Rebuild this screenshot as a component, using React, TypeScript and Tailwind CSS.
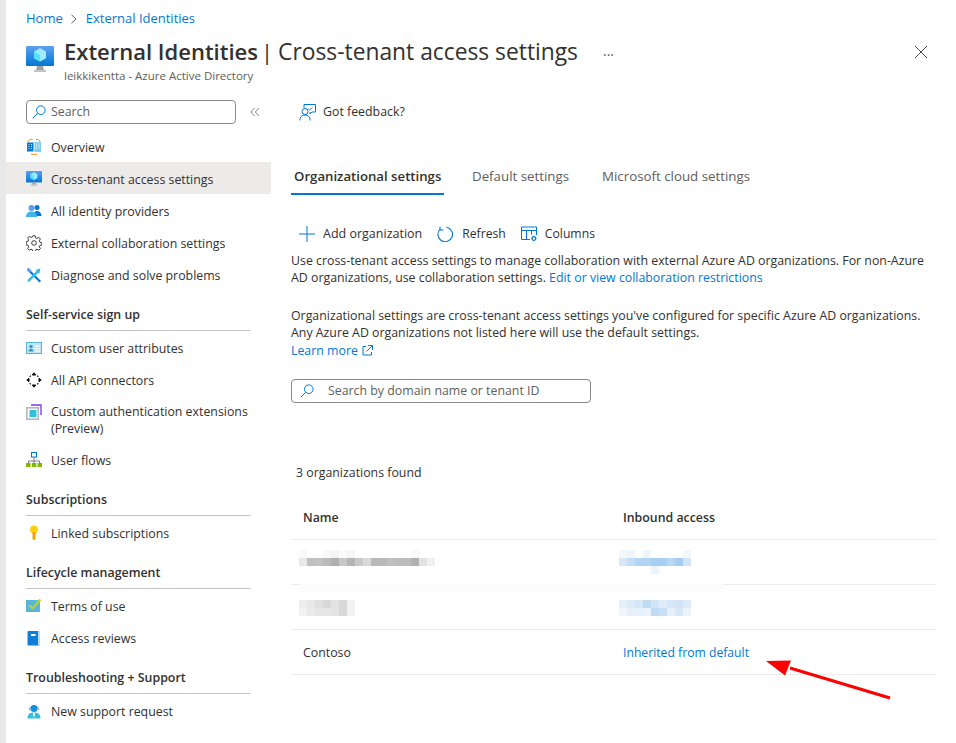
import React from "react";

const font = { fontFamily: '"Open Sans", "Noto Sans", sans-serif' };

const MonitorIcon = ({ size = 16 }: { size?: number }) => (
  <svg width={size} height={size} viewBox="0 0 28 28">
    <defs>
      <linearGradient id="mon" x1="0" y1="0" x2="0" y2="1">
        <stop offset="0" stopColor="#5ea0ef" />
        <stop offset="1" stopColor="#0078d4" />
      </linearGradient>
    </defs>
    <rect x="0" y="0" width="28" height="20" rx="1" fill="url(#mon)" />
    <path d="M11 20h6l1 4h-8z" fill="#a3a3a3" />
    <rect x="8" y="24" width="12" height="2" fill="#c4c4c4" />
    <path d="M14 2l6 3.400v6.800l-6 3.400-6-3.400V5.400z" fill="#9cebff" />
    <path d="M14 9v6.600l-6-3.400V5.400z" fill="#50e6ff" />
  </svg>
);

const OverviewIcon = () => (
  <svg width="16" height="16" viewBox="0 0 16 16">
    <path d="M2 3c0-1.500 1.500-2.500 3.500-2.500h1M10 .5h1c2 0 3 1 3 2.500M5 15.300h6" stroke="#f78d1e" fill="none" />
    <rect x="1" y="3.500" width="6.500" height="9" fill="#0078d4" />
    <rect x="8.500" y="3" width="6.500" height="10" fill="#7fcdee" />
    <path d="M2.500 5.500h1M5 5.500h1M2.500 7.500h1M5 7.500h1M2.500 9.500h1M5 9.500h1" stroke="#cfe8fa" />
    <path d="M10 5h1M12.500 5h1M10 7h1M12.500 7h1M10 9h1M12.500 9h1" stroke="#fff" />
  </svg>
);

const PeopleIcon = () => (
  <svg width="16" height="16" viewBox="0 0 16 16">
    <circle cx="11" cy="4.500" r="2.500" fill="#0078d4" />
    <path d="M7.500 13c0-3 1.500-5 3.500-5s4.500 1.500 4.500 5z" fill="#0078d4" />
    <circle cx="5.500" cy="5" r="3" fill="#5ea0ef" />
    <path d="M0 14c0-3.500 2-5.500 5.500-5.500S11 10.500 11 14z" fill="#3fb4e8" />
  </svg>
);

const GearIcon = () => (
  <svg width="16" height="16" viewBox="0 0 16 16" fill="none" stroke="#3b3a39">
    <circle cx="8" cy="8" r="2.300" />
    <path d="M6.800.8h2.400l.4 2 1.400.6 1.800-1.100 1.600 1.700-1.100 1.700.6 1.500 1.900.4v2.400l-1.900.4-.6 1.500 1.100 1.700-1.600 1.700-1.800-1.100-1.400.6-.4 2H6.800l-.4-2-1.400-.6-1.800 1.100-1.600-1.700 1.100-1.700-.6-1.500-1.900-.4V6.600l1.900-.4.600-1.500-1.100-1.700L3.200 1.300 5 2.400l1.400-.6z" />
  </svg>
);

const ToolsIcon = () => (
  <svg width="16" height="16" viewBox="0 0 16 16">
    <path d="M2 1l13 13-1.500 1.500L1 3z" fill="#0078d4" />
    <path d="M14.500 1.500l-4 1-.5 2L2 12.500 1.500 15l2-.5 8-8 2-.5z" fill="#32bedd" />
    <path d="M1 2l2-1 2.500 2.500-2 2z" fill="#5ea0ef" />
  </svg>
);

const AttrIcon = () => (
  <svg width="16" height="14" viewBox="0 0 16 14">
    <rect x=".5" y="1.500" width="15" height="11" fill="#c3e7f5" stroke="#59b4d9" />
    <circle cx="5" cy="5.500" r="1.700" fill="#3999c6" />
    <path d="M2.500 10.500c0-2 1-2.800 2.500-2.800s2.500.8 2.500 2.800z" fill="#3999c6" />
    <path d="M9 5h5M9 7.500h5M9 10h5" stroke="#fff" />
  </svg>
);

const MoveIcon = () => (
  <svg width="16" height="16" viewBox="0 0 16 16" fill="none" stroke="#111">
    <path d="M8 .8L6.200 3h3.600z" fill="#111" />
    <path d="M8 15.200L6.200 13h3.600z" fill="#111" />
    <path d="M.8 8L3 6.200v3.600z" fill="#111" />
    <path d="M15.200 8L13 6.200v3.600z" fill="#111" />
    <path d="M3.500 4.500h1M4.500 3.500v1M12.500 4.500h-1M11.500 3.500v1M3.500 11.500h1M4.500 12.500v-1M12.500 11.500h-1M11.500 12.500v-1" />
  </svg>
);

const ExtIcon = () => (
  <svg width="16" height="16" viewBox="0 0 16 16">
    <path d="M5 1h10v10" fill="none" stroke="#773adc" strokeWidth="1.300" />
    <rect x=".8" y="3.800" width="11.400" height="11.400" fill="#fff" stroke="#b3b3b3" strokeWidth="1.500" />
    <rect x="3.500" y="6" width="7" height="7" fill="#32bedd" />
  </svg>
);

const FlowIcon = () => (
  <svg width="16" height="16" viewBox="0 0 16 16">
    <path d="M8 5v4M2.500 12V9h11v3M8 9v3" fill="none" stroke="#7a7a7a" />
    <rect x="5.500" y=".5" width="5" height="4.500" fill="#fff" stroke="#0078d4" />
    <rect x="0" y="11" width="4.500" height="4" fill="#7fba00" />
    <rect x="5.800" y="11" width="4.500" height="4" fill="#7fba00" />
    <rect x="11.500" y="11" width="4.500" height="4" fill="#7fba00" />
  </svg>
);

const KeyIcon = () => (
  <svg width="16" height="16" viewBox="0 0 16 16">
    <circle cx="8" cy="4.500" r="4" fill="#fcd116" />
    <path d="M6.500 7h3v7l-1.500 1.500-1.500-1.500z" fill="#f0a400" />
    <circle cx="8" cy="3.500" r="1" fill="#ffb900" />
  </svg>
);

const TermsIcon = () => (
  <svg width="16" height="16" viewBox="0 0 16 16">
    <rect x="0" y="2" width="14" height="12" fill="#59b4d9" />
    <path d="M3 7l3.500 3.500L14.500 1.500" fill="none" stroke="#b8d432" strokeWidth="2.200" />
  </svg>
);

const BookIcon = () => (
  <svg width="16" height="16" viewBox="0 0 16 16">
    <rect x="1.500" y="1" width="12.500" height="14.500" rx="1" fill="#0f7fd8" />
    <rect x="12" y="1" width="2" height="14.500" fill="#b6dcf5" />
    <rect x="5" y="4" width="4.500" height="2" fill="#fff" />
  </svg>
);

const SupportIcon = () => (
  <svg width="16" height="16" viewBox="0 0 16 16">
    <path d="M3.500 7C3 1.500 13 1.500 12.500 7" fill="none" stroke="#8a8a8a" />
    <circle cx="8" cy="5.500" r="3.500" fill="#1490df" />
    <path d="M1.500 15.500c0-4 2-6 6.500-6s6.500 2 6.500 6z" fill="#32bedd" />
    <path d="M8 9.500l-1.200 1.200L8 15l1.200-4.300z" fill="#fff" />
  </svg>
);

const SearchGlyph = ({ color = "#0078d4" }: { color?: string }) => (
  <svg width="14" height="14" viewBox="0 0 14 14" fill="none" stroke={color}>
    <circle cx="8.800" cy="5.200" r="4.300" />
    <path d="M5.700 8.300L.8 13.200" />
  </svg>
);

const FeedbackIcon = () => (
  <svg width="17" height="17" viewBox="0 0 17 17" fill="none" stroke="#0078d4">
    <path d="M5 4V.5h11.500v7.500H13l-2 2V8" />
    <circle cx="6" cy="7.500" r="3" />
    <path d="M.8 16.500c0-3.500 2-5.500 5.200-5.500s5.200 2 5.200 5.500" />
    <path d="M9.500 5l1.200 1 2.500-2.500" />
  </svg>
);

const PlusIcon = () => (
  <svg width="16" height="16" viewBox="0 0 16 16" stroke="#0078d4">
    <path d="M8 0v16M0 8h16" />
  </svg>
);

const RefreshIcon = () => (
  <svg width="16" height="16" viewBox="0 0 16 16" fill="none" stroke="#0078d4">
    <path d="M9.500 1.200A7.300 7.300 0 1 1 3.500 2.800" strokeWidth="1.100" />
    <path d="M3 .5v3.500h3.500" strokeWidth="1" />
  </svg>
);

const ColumnsIcon = () => (
  <svg width="17" height="16" viewBox="0 0 17 16" fill="none" stroke="#0078d4">
    <path d="M9 13.500H.5V1h15v8" />
    <path d="M.5 4.500h15M5.500 4.500v9M10.500 4.500v4" />
    <circle cx="12.800" cy="12.500" r="1.800" strokeWidth="1.200" />
    <path d="M12.800 9.800v.9M12.800 14.300v.9M10.100 12.500h.9M14.600 12.500h.9" strokeWidth="1" />
  </svg>
);

const ExternalIcon = () => (
  <svg width="11" height="11" viewBox="0 0 11 11" fill="none" stroke="#0078d4">
    <path d="M4 1.500H1v8.500h8.500V7" />
    <path d="M6 .5h4.500V5M10.500 .5L4.500 6.500" />
  </svg>
);

const Mosaic = ({ rows }: { rows: string[][] }) => (
  <svg width={rows[0].length * 8} height={rows.length * 8} className="block">
    {rows.map((row, y) =>
      row.map((c, x) => <rect key={`${x}-${y}`} x={x * 8} y={y * 8} width="8" height="8" fill={c} />)
    )}
  </svg>
);

const NavItem = ({
  icon,
  children,
  active,
  tall,
}: {
  icon: React.ReactNode;
  children: React.ReactNode;
  active?: boolean;
  tall?: boolean;
}) => (
  <div
    className={`flex items-center pl-5 text-[12.35px] leading-[17px] text-[#323130] ${tall ? "h-12" : "h-8"} ${
      active ? "bg-[#edebe9] -mt-px mb-px pt-[2px]" : ""
    }`}
  >
    <span className={`w-[25px] flex-none flex items-center ${tall ? "self-start mt-2" : ""}`}>{icon}</span>
    <span>{children}</span>
  </div>
);

const NavHeader = ({ children }: { children: React.ReactNode }) => (
  <div className="ml-5 mr-[20px] h-10 mb-px flex items-end pb-[7px] border-b border-[#c8c6c4] text-[12.4px] leading-[17px] font-semibold text-[#323130]">
    {children}
  </div>
);

export default function App() {
  return (
    <div style={font} className="w-[956px] h-[743px] flex overflow-hidden bg-white text-[#323130]">
      <div className="w-1.5 flex-none bg-[#e8e8e8]" />
      <div className="flex-1 min-w-0 flex flex-col relative">
        {/* header */}
        <div className="h-[100px] flex-none pl-5">
          <div className="h-9 pt-[2px] flex items-center text-[13px] text-[#0078d4]">
            <span>Home</span>
            <svg width="8" height="10" viewBox="0 0 8 10" fill="none" stroke="#605e5c" className="ml-[7px] mr-2">
              <path d="M1.500 .8L6 5 1.500 9.200" />
            </svg>
            <span>External Identities</span>
          </div>
          <div className="flex items-start">
            <div className="w-[38px] pt-[10px]">
              <MonitorIcon size={28} />
            </div>
            <div>
              <div className="h-8 flex items-baseline leading-[31px] whitespace-nowrap text-[#323130]">
                <span className="text-[22px] font-semibold">External Identities</span>
                <span className="ml-[3px] text-[22px]">|</span>
                <span className="ml-[5px] text-[22.8px]">Cross-tenant access settings</span>
                <span className="ml-[25px] text-[14px] text-[#605e5c]">···</span>
              </div>
              <div className="text-[11.5px] leading-[16px] text-[#605e5c]">leikkikentta - Azure Active Directory</div>
            </div>
            <svg width="14" height="14" viewBox="0 0 14 14" stroke="#484644" className="ml-auto mr-[28px] mt-[9px]">
              <path d="M1 1l12 12M13 1L1 13" />
            </svg>
          </div>
        </div>

        <div className="flex flex-1 min-h-0">
          {/* sidebar */}
          <div className="w-[265px] flex-none">
            <div className="flex items-center pl-5 h-[31px] pb-[7px]">
              <div className="w-[210px] h-6 border border-[#8a8886] rounded-sm flex items-center pl-[5px] text-[12.35px] text-[#605e5c]">
                <SearchGlyph />
                <span className="ml-[5px]">Search</span>
              </div>
              <svg width="10" height="10" viewBox="0 0 10 10" fill="none" stroke="#8a8886" className="ml-[14px]">
                <path d="M4.500 1L.8 5l3.700 4M9 1L5.300 5 9 9" />
              </svg>
            </div>
            <NavItem icon={<OverviewIcon />}>Overview</NavItem>
            <NavItem icon={<MonitorIcon />} active>
              Cross-tenant access settings
            </NavItem>
            <NavItem icon={<PeopleIcon />}>All identity providers</NavItem>
            <NavItem icon={<GearIcon />}>External collaboration settings</NavItem>
            <NavItem icon={<ToolsIcon />}>Diagnose and solve problems</NavItem>

            <NavHeader>Self-service sign up</NavHeader>
            <NavItem icon={<AttrIcon />}>Custom user attributes</NavItem>
            <NavItem icon={<MoveIcon />}>All API connectors</NavItem>
            <NavItem icon={<ExtIcon />} tall>
              Custom authentication extensions
              <br />
              (Preview)
            </NavItem>
            <NavItem icon={<FlowIcon />}>User flows</NavItem>

            <NavHeader>Subscriptions</NavHeader>
            <NavItem icon={<KeyIcon />}>Linked subscriptions</NavItem>

            <NavHeader>Lifecycle management</NavHeader>
            <NavItem icon={<TermsIcon />}>Terms of use</NavItem>
            <NavItem icon={<BookIcon />}>Access reviews</NavItem>

            <NavHeader>Troubleshooting + Support</NavHeader>
            <NavItem icon={<SupportIcon />}>New support request</NavItem>
          </div>

          {/* content */}
          <div className="flex-1 min-w-0 pl-5 pr-[19px] text-[12.35px]">
            <div className="flex items-center h-6 pl-2 text-[#323130]">
              <FeedbackIcon />
              <span className="ml-[7px]">Got feedback?</span>
            </div>

            <div className="flex mt-[39px] h-[32px] text-[13.3px] text-[#605e5c]">
              <div className="px-[3px] w-[153px] h-[32px] flex-none pt-1 border-b-2 border-[#0078d4] font-semibold text-[13.2px] whitespace-nowrap text-[#323130]">
                Organizational settings
              </div>
              <div className="ml-7 pt-1">Default settings</div>
              <div className="ml-[33px] pt-1">Microsoft cloud settings</div>
            </div>

            <div className="flex items-center mt-[27px] h-6 pl-2 text-[#323130]">
              <PlusIcon />
              <span className="ml-2 text-[12.5px]">Add organization</span>
              <span className="ml-[15px]"><RefreshIcon /></span>
              <span className="ml-[9px] text-[12.2px]">Refresh</span>
              <span className="ml-[15px]"><ColumnsIcon /></span>
              <span className="ml-[7px] text-[12.2px]">Columns</span>
            </div>

            <p className="mt-[6px] leading-[17px] text-[#323130] whitespace-nowrap">
              Use cross-tenant access settings to manage collaboration with external Azure AD organizations. For non-Azure
              <br />
              AD organizations, use collaboration settings.{" "}
              <span className="text-[#0078d4]">Edit or view collaboration restrictions</span>
            </p>
            <p className="mt-[21px] leading-[17px] text-[#323130] whitespace-nowrap">
              Organizational settings are cross-tenant access settings you've configured for specific Azure AD organizations.
              <br />
              Any Azure AD organizations not listed here will use the default settings.
            </p>
            <div className="mt-px flex items-center gap-1 leading-[17px] text-[#0078d4]">
              Learn more <ExternalIcon />
            </div>

            <div className="mt-5 w-[300px] h-6 border border-[#8a8886] rounded-sm flex items-center pl-2 text-[#605e5c]">
              <SearchGlyph />
              <span className="ml-[14px]">Search by domain name or tenant ID</span>
            </div>

            <div className="mt-[61px] pl-[5px] leading-[17px] text-[#323130]">3 organizations found</div>

            {/* table */}
            <div className="mt-[22px]">
              <div className="h-[37px] pb-1.5 flex items-center border-b border-[#edebe9] font-semibold text-[#323130]">
                <div className="w-[332px] pl-3">Name</div>
                <div>Inbound access</div>
              </div>
              <div className="h-[45px] flex border-b border-[#edebe9]">
                <div className="w-[328px] pl-2 pt-[10px]">
                  <Mosaic
                    rows={[
                      ["#f9f9f9", "#fff", "#fff", "#f9f9f9", "#f4f4f4", "#fbfbfb", "#f6f6f6", "#fff", "#fff", "#fff", "#fff", "#fff", "#fff", "#fff", "#f9f9f9", "#fff", "#fff"],
                      ["#e8e8e8", "#bfbfbf", "#c2c2c2", "#bbb", "#b0b0b0", "#c8c8c8", "#b5b5b5", "#c9c9c9", "#d9d9d9", "#b9b9b9", "#b9b9b9", "#c0c0c0", "#bcbcbc", "#bcbcbc", "#b0b0b0", "#e2e2e2", "#f0f0f0"],
                    ]}
                  />
                </div>
                <div className="pt-[10px]">
                  <Mosaic
                    rows={[
                      ["#f3f8fd", "#eef5fc", "#fff", "#eef5fc", "#fff", "#fff", "#fff", "#fff", "#f3f8fd"],
                      ["#d6e8f8", "#c2ddf5", "#b2d5f3", "#b2d5f3", "#a8cff1", "#a8cff1", "#b8d8f3", "#a6cef0", "#d2e5f7"],
                      ["#fff", "#fff", "#fff", "#fff", "#ebf3fb", "#fff", "#fff", "#fff", "#fff"],
                    ]}
                  />
                </div>
              </div>
              <div className="relative h-[45px] flex border-b border-[#edebe9]">
                {/* smudged strip left by the blur, sits on the divider above */}
                <div className="absolute -top-px left-2 w-[424px] h-2 bg-[#fcfcfc]" />
                <div className="w-[328px] pl-2 pt-[15px]">
                  <Mosaic
                    rows={[
                      ["#eee", "#e8e8e8", "#e0e0e0", "#d8d8d8", "#e2e2e2", "#d8d8d8", "#f2f2f2"],
                      ["#f2f2f2", "#eaeaea", "#e6e6e6", "#e6e6e6", "#e4e4e4", "#d8d8d8", "#f2f2f2"],
                    ]}
                  />
                </div>
                <div className="pt-[15px]">
                  <Mosaic
                    rows={[
                      ["#e6f0fa", "#ddebf8", "#d6e7f7", "#bedbf4", "#d2e5f7", "#dfecf9", "#d6e7f7", "#d2e5f7", "#dcebf8"],
                      ["#f0f6fc", "#e6f0fa", "#e6f0fa", "#eaf3fb", "#bfdcf5", "#c8e0f6", "#e6f0fa", "#d6e7f7", "#ebf3fb"],
                    ]}
                  />
                </div>
              </div>
              <div className="h-[45px] pt-[2px] flex items-center border-b border-[#edebe9]">
                <div className="w-[332px] pl-3">Contoso</div>
                <div className="text-[#0078d4] text-[12.2px]">Inherited from default</div>
              </div>
            </div>
          </div>
        </div>

        {/* red annotation arrow drawn over the table */}
        <svg width="130" height="44" viewBox="0 0 130 44" className="absolute left-[760px] top-[660px]">
          <path d="M124 38L24 8" stroke="#ff0000" strokeWidth="3" />
          <path d="M0 1l25-.500-6 15z" fill="#ff0000" />
        </svg>
      </div>
    </div>
  );
}
